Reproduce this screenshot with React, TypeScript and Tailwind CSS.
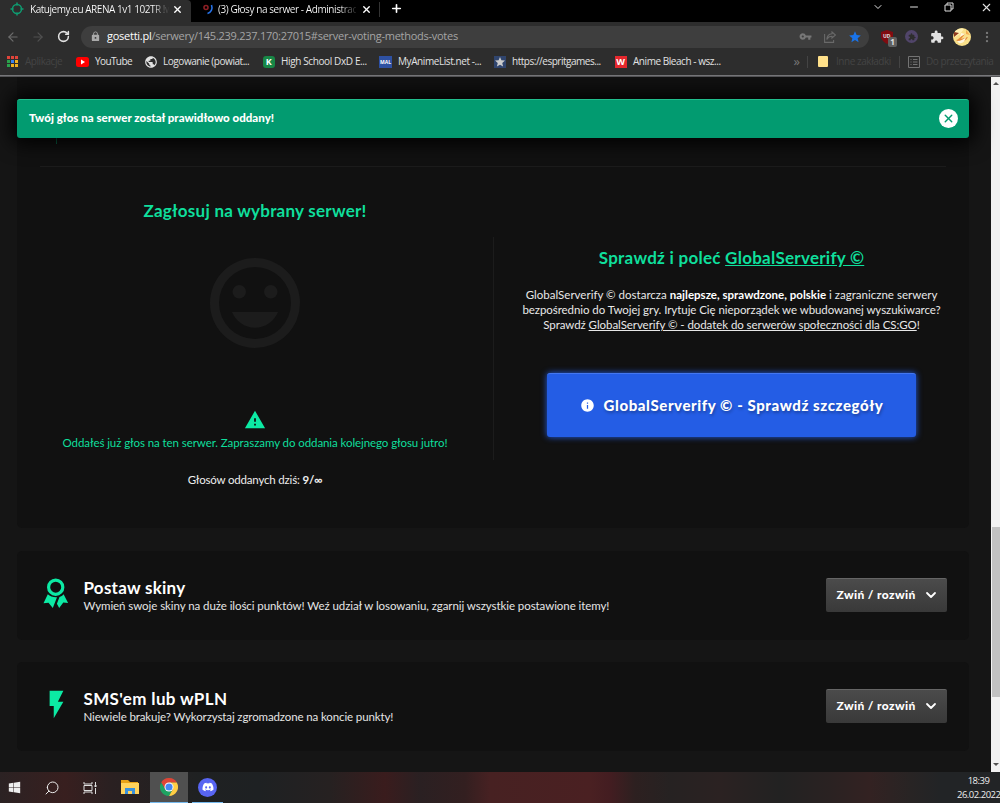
import type { ReactNode } from 'react';
import { MdWarning, MdFlashOn, MdLock, MdExtension, MdStar, MdPublic, MdVpnKey, MdInfo } from 'react-icons/md';
import { FaDiscord, FaWindows } from 'react-icons/fa';
import { ArrowLeft, ArrowRight, RotateCw, X, Plus, ChevronDown, Minus, Search, MoreVertical } from 'lucide-react';

const ui = "font-['Open_Sans','Noto_Sans',sans-serif]";

function Bookmark({ icon, label, className }: { icon: ReactNode; label: string; className: string }) {
  return (
    <div className={`flex shrink-0 items-center whitespace-nowrap ${className}`}>
      <span className="mr-[6px] flex w-[13px] shrink-0 justify-center">{icon}</span>
      <span>{label}</span>
    </div>
  );
}

function Target({ className }: { className: string }) {
  return (
    <svg viewBox="0 0 14 14" className={className} fill="none" stroke="#0f9b70" strokeWidth="1.5">
      <circle cx="7" cy="7" r="4.5" />
      <path d="M7 .5v3M7 10.500v3M.5 7h3M10.500 7h3" />
    </svg>
  );
}

function Ribbon() {
  return (
    <svg viewBox="0 0 26 31" className="mb-[4px] h-[31px] w-[26px]" fill="#0ceaa4">
      <path fillRule="evenodd" d="M12.700 .5a8.700 8.700 0 1 1 0 17.400 8.700 8.700 0 0 1 0-17.400zm0 3.200a5.500 5.500 0 1 0 0 11 5.500 5.500 0 0 0 0-11z" />
      <path d="M4.800 16.300 .5 25.200l5-.4 4.300 5.200 4.200-10.800c-3.600.2-6.900-.6-9.200-2.900z" />
      <path d="M20.600 16.300l4.500 8.700-4.800-.4-4.100 5.400-2.300-4.300 2.600-6.700c1.600-.5 3-1.400 4.100-2.700z" />
    </svg>
  );
}

function Toggle() {
  return (
    <button className="flex h-[34px] w-[121px] shrink-0 items-center justify-between rounded-[2px] border-t border-[#666] bg-linear-to-b from-[#4b4b4b] to-[#393939] pr-[9px] pb-px pl-[10.500px] text-[12px] font-black tracking-[0.370px] text-white">
      Zwiń / rozwiń
      <ChevronDown size={16} strokeWidth={2.700} className="-mr-px" />
    </button>
  );
}

function Method({ icon, title, text, titleClass, textClass }: { icon: ReactNode; title: string; text: string; titleClass: string; textClass: string }) {
  return (
    <section className="flex h-[89px] items-center rounded-[5px] bg-[#111] pr-[22px] pl-[25px]">
      <div className="flex w-[28px] justify-center">{icon}</div>
      <div className="ml-[13.500px] flex-1 whitespace-nowrap">
        <h3 className={`h-[21px] text-[17px] leading-[21px] font-bold text-white ${titleClass}`}>{title}</h3>
        <p className={`text-[11.500px] leading-[15px] text-[#e5e5e5] ${textClass}`}>{text}</p>
      </div>
      <Toggle />
    </section>
  );
}

function ShareArrow() {
  return (
    <svg viewBox="0 0 12 12" className="ml-[12px] h-[12px] w-[12px]" fill="none" stroke="#696969" strokeWidth="1.100">
      <path d="M.6 3v8.400h9V9" />
      <path d="M8 1l3.400 3L8 7V5.300C5.500 5.200 4 6.300 2.800 8.500 3 5.200 5 3 8 2.700z" />
    </svg>
  );
}

function Browser() {
  return (
    <header className={`${ui} h-[77px] bg-[#2d2d2d] text-[10px] text-[#e2e2e2]`}>
      <div className="flex h-[22px] bg-black">
        <div className="flex h-[22px] w-[191px] shrink-0 items-center rounded-tr-[4px] bg-[#2d2d2d] pb-[4px] pl-[10px]">
          <Target className="h-[14px] w-[14px]" />
          <span className="ml-[6px] w-[139px] shrink-0 bg-linear-to-r from-white from-88% to-[#333] bg-clip-text tracking-[-0.460px] whitespace-nowrap text-transparent">Katujemy.eu ARENA 1v1 102TR !w</span>
          <X size={11} strokeWidth={3} className="ml-[3px] text-white" />
        </div>
        <div className="flex h-[22px] w-[189px] shrink-0 items-center pb-[4px] pl-[11px]">
          <svg viewBox="0 0 12 12" className="h-[12px] w-[12px]" fill="none" strokeWidth="1.6">
            <circle cx="4" cy="4.500" r="2" stroke="#8d1f24" />
            <path d="M9.500 2c1.500 4-.5 7.500-4 8.500" stroke="#2672e8" />
          </svg>
          <span className="ml-[4px] w-[138px] shrink-0 bg-linear-to-r from-white from-88% to-[#222] bg-clip-text tracking-[-0.420px] whitespace-nowrap text-transparent">(3) Głosy na serwer - Administrac</span>
          <X size={11} strokeWidth={3} className="ml-[5px] text-white" />
          <span className="ml-auto h-[15px] w-px bg-[#333]" />
        </div>
        <Plus size={13} strokeWidth={3} className="mt-[2px] ml-[10px] text-white" />
        <div className="ml-auto flex h-[14px] items-center pr-[7px]">
          <ChevronDown size={12} className="mr-[24px]" />
          <Minus size={12} className="mr-[24px]" />
          <svg viewBox="0 0 10 10" className="mr-[26px] h-[10px] w-[10px]" fill="none" stroke="#ddd"><path d="M1 3h6v6H1zM3 3V1h6v6H7" /></svg>
          <X size={13} />
        </div>
      </div>
      <div className="flex h-[28px] items-center pt-[1px]">
        <ArrowLeft size={14} className="ml-[6px] text-[#6d6d6d]" />
        <ArrowRight size={14} className="ml-[11px] text-[#505050]" />
        <RotateCw size={13} strokeWidth={2.800} className="ml-[12px]" />
        <div className="ml-[11px] flex h-[22px] w-[788px] shrink-0 items-center rounded-full bg-[#3e3e3e] pr-[7px] pl-[9px]">
          <MdLock size={11} className="text-[#aaa]" />
          <span className="ml-[6px] text-[11px] tracking-[-0.260px] whitespace-nowrap text-[#a5a5a5]"><span className="text-white">gosetti.pl</span>/serwery/145.239.237.170:27015#server-voting-methods-votes</span>
          <MdVpnKey size={13} className="ml-auto text-[#777]" />
          <ShareArrow />
          <MdStar size={14} className="ml-[12px] text-[#1a73e8]" />
        </div>
        <div className="relative ml-[12px] h-[14px] w-[12px]">
          <svg viewBox="0 0 12 14" className="h-[14px] w-[12px]"><path d="M6 0l6 2v4c0 4-3 6-6 8-3-2-6-4-6-8V2z" fill="#800b10" /></svg>
          <span className="absolute top-[3px] left-[2px] text-[5px] leading-[6px] font-bold">UD</span>
          <span className="absolute top-[7px] left-[7px] h-[10px] w-[9px] rounded-[2px] bg-[#606060] text-center text-[8px] leading-[10px] font-bold">1</span>
        </div>
        <span className="ml-[12px] flex h-[13px] w-[13px] shrink-0 items-center justify-center rounded-full bg-[#51456a]"><MdExtension size={8} className="text-[#2d2d2d]" /></span>
        <MdExtension size={14} className="ml-[12px] shrink-0" />
        <Avatar />
        <MoreVertical size={14} className="ml-[9px] shrink-0 text-[#777]" />
      </div>
      <div className="flex h-[25px] items-center pb-[2px]">
        <Bookmark className="ml-[6px] w-[70px] tracking-[-0.450px] text-[#444]" label="Aplikacje" icon={<AppsIcon />} />
        <Bookmark className="w-[68px] tracking-[-0.600px]" label="YouTube" icon={<svg viewBox="0 0 13 10" className="h-[10px] w-[13px]"><rect width="13" height="10" rx="2.500" fill="#f00" /><path d="M5 2.500v5L9 5z" fill="#fff" /></svg>} />
        <Bookmark className="w-[118px] tracking-[-0.450px]" label="Logowanie (powiat..." icon={<MdPublic size={14} className="shrink-0" />} />
        <Bookmark className="w-[117px] tracking-[-0.380px]" label="High School DxD E..." icon={<span className="h-[12px] w-[12px] rounded-[3px] bg-[#188746] text-center text-[9px] leading-[12px] font-bold text-white">K</span>} />
        <Bookmark className="w-[114px] tracking-[-0.420px]" label="MyAnimeList.net -..." icon={<span className="h-[12px] w-[13px] bg-[#2e51a2] text-center text-[5px] leading-[12px] font-bold tracking-normal text-white">MAL</span>} />
        <Bookmark className="w-[121px] tracking-[-0.480px]" label="https://espritgames..." icon={<span className="bg-[#30456e]"><MdStar size={12} className="text-[#ccc]" /></span>} />
        <Bookmark className="tracking-[-0.450px]" label="Anime Bleach - wsz..." icon={<span className="h-[12px] w-[12px] bg-[#e5282d] text-center text-[9px] leading-[12px] font-bold tracking-normal text-white">W</span>} />
        <div className="ml-auto flex shrink-0 items-center pr-[1px] whitespace-nowrap text-[#444]">
          <span className="text-[13px] text-[#777]">»</span>
          <span className="ml-[7px] h-[12px] w-px bg-[#444]" />
          <span className="ml-[10px] h-[11px] w-[10px] rounded-[1px] bg-[#ffe08a]" />
          <span className="ml-[8px] w-[55px] tracking-[-0.450px]">Inne zakładki</span>
          <span className="ml-[8px] h-[12px] w-px bg-[#444]" />
          <svg viewBox="0 0 12 12" className="ml-[8px] h-[12px] w-[12px]" fill="none" stroke="#737373"><path d="M.5.500h11v11H.5zM2.500 3.500h1M5 3.500h4.500M2.500 6h1M5 6h4.500M2.500 8.500h1M5 8.500h4.500" /></svg>
          <span className="ml-[6px] w-[73px] tracking-[-0.450px]">Do przeczytania</span>
        </div>
      </div>
      <div className="h-[2px] bg-linear-to-b from-[#77777a] from-50% to-[#555558] to-50%" />
    </header>
  );
}

function AppsIcon() {
  return (
    <svg viewBox="0 0 11 11" className="h-[11px] w-[11px]">
      <path d="M0 0h3v3H0zM4 0h3v3H4zM8 0h3v3H8z" fill="#e0443a" />
      <path d="M0 4h3v3H0zM0 8h3v3H0z" fill="#2ba24c" />
      <path d="M4 4h3v3H4z" fill="#3b82ed" />
      <path d="M8 4h3v3H8zM4 8h3v3H4zM8 8h3v3H8z" fill="#f2b01e" />
    </svg>
  );
}

function Avatar() {
  return (
    <svg viewBox="0 0 18 18" className="ml-[9px] h-[18px] w-[18px] shrink-0">
      <circle cx="9" cy="9" r="9" fill="#f9e08a" />
      <path d="M1 5c3-5 8-5 10-4L7 6 2 9z" fill="#fff1b4" />
      <path d="M1 4l5 1-5 4z" fill="#8f3a1c" />
      <path d="M3 12c3 0 5-5 9-6l-4 5 7-2c-2 4-6 6-9 5z" fill="#e58a3a" />
      <path d="M4 13c4 0 7-2 9-4-1 5-4 7-7 6zM8 5l4 1-5 3z" fill="#fff6dc" />
      <path d="M13 2l4 5-4-1z" fill="#f2a94e" />
    </svg>
  );
}

function Taskbar() {
  return (
    <footer className={`${ui} flex h-[31px] items-center bg-[linear-gradient(90deg,#2b2223_0,#381f1f_6.500%,#2a2021_11%,#1f2122_20%,#1e2123_26%,#262121_33%,#3a1c1d_38.500%,#2a2022_42%,#331f20_46.500%,#472122_49%,#4a2022_59%,#431d21_61%,#2d2020_63.500%,#262222_67%,#2b2222_72%,#222222_78%,#2a2222_83%,#332222_87%,#282424_91%,#222426_94%,#222426_100%)] text-[#eee]`}>
      <FaWindows size={13} className="ml-[8px]" />
      <Search size={16} strokeWidth={1.500} className="ml-[23px] -scale-x-100" />
      <svg viewBox="0 0 14 14" className="ml-[23px] h-[14px] w-[14px]" fill="none" stroke="#ddd"><path d="M1 1v2h8V1M1 13v-2h8v2M1 4.500h8v5H1zM12.500 1v3M12.500 7v6" /><path d="M11.500 5h2" strokeWidth="2" /></svg>
      <svg viewBox="0 0 18 15" className="ml-[24px] h-[15px] w-[18px]"><path d="M0 0h7l2 2h8v12H0z" fill="#e8a317" /><path d="M0 3h18v11H0z" fill="#ffd35c" /><path d="M4 8h10v6h-3v-3H7v3H4z" fill="#3a91dc" /></svg>
      <div className="ml-[11px] flex h-[31px] w-[38px] items-center justify-center border-b border-[#76b9ed] bg-[#505050]">
        <svg viewBox="0 0 48 48" className="h-[18px] w-[18px]">
          <path d="M3.200 12A24 24 0 0 1 44.800 12H24L13.600 30z" fill="#de4536" />
          <path d="M3.200 12A24 24 0 0 0 24 48l10.400-18-10.400 6-10.400-6z" fill="#1ea362" />
          <path d="M44.800 12A24 24 0 0 1 24 48l10.400-18V18L24 12z" fill="#ffce44" />
          <circle cx="24" cy="24" r="12" fill="#fff" />
          <circle cx="24" cy="24" r="9.500" fill="#4587f3" />
        </svg>
      </div>
      <div className="ml-[4px] flex h-[31px] w-[31px] items-center justify-center border-b border-[#76b9ed]">
        <span className="flex h-[19px] w-[19px] items-center justify-center rounded-full bg-[#5865f2]"><FaDiscord size={12} className="text-white" /></span>
      </div>
      <div className="ml-auto w-[43px] text-center text-[9.500px] leading-[14px] tracking-[-0.500px] whitespace-nowrap">
        <div>18:39</div>
        <div>26.02.2022</div>
      </div>
    </footer>
  );
}

export default function App() {
  return (
    <div className="flex h-[803px] w-[1000px] flex-col overflow-hidden bg-[#151515] font-['Lato',sans-serif]">
      <Browser />
      <div className="relative flex h-[695px]">
        <main className="w-[991px] pl-[17px]">
          <div className="flex w-[952px] flex-col gap-[22.250px]">
            <section className="h-[451.250px] rounded-b-[5px] bg-[#111] px-[23px]">
              <div className="flex h-[90px] items-start border-b border-[#1c1c1c] pt-[58px] pl-[16px]">
                <span className="h-[9px] w-px bg-[#08704f]" />
              </div>
              <div className="flex">
                <div className="flex w-[430px] shrink-0 flex-col items-center whitespace-nowrap">
                  <h2 className="mt-[33px] text-[17px] leading-[22px] font-bold tracking-[0.250px] text-[#0fdf9c]">Zagłosuj na wybrany serwer!</h2>
                  <svg viewBox="0 0 24 24" className="mt-[27px] h-[108px] w-[108px]" fill="#1c1c1c">
                    <path fillRule="evenodd" d="M12 2a10 10 0 1 0 0 20 10 10 0 0 0 0-20zm0 2a8 8 0 1 1 0 16 8 8 0 0 1 0-16z" />
                    <circle cx="8.500" cy="9.500" r="1.500" />
                    <circle cx="15.500" cy="9.500" r="1.500" />
                    <path d="M12 17.500c2.330 0 4.310-1.460 5.110-3.500H6.890c.8 2.040 2.780 3.500 5.110 3.500z" />
                  </svg>
                  <MdWarning size={22} className="mt-[52px] text-[#0ceaa4]" />
                  <p className="mt-[4px] text-[11.500px] leading-[15px] tracking-[-0.080px] text-[#0fdf9c]">Oddałeś już głos na ten serwer. Zapraszamy do oddania kolejnego głosu jutro!</p>
                  <p className="mt-[22px] text-[11.500px] leading-[15px] tracking-[-0.180px] text-[#eee]">Głosów oddanych dziś: <b>9/∞</b></p>
                </div>
                <div className="mt-[70px] ml-[23px] h-[223px] w-px shrink-0 bg-[#1c1c1c]" />
                <div className="flex w-[475px] shrink-0 flex-col items-center text-center whitespace-nowrap">
                  <h2 className="mt-[80px] text-[17px] leading-[22px] font-bold tracking-[0.260px] text-[#0fdf9c]">Sprawdź i poleć <span className="underline">GlobalServerify ©</span></h2>
                  <div className="mt-[18px] text-[11.500px] leading-[15px] tracking-[-0.060px] text-[#e8e8e8]">
                    <p className="tracking-[0.010px]">GlobalServerify © dostarcza <b className="text-white">najlepsze, sprawdzone, polskie</b> i zagraniczne serwery</p>
                    <p>bezpośrednio do Twojej gry. Irytuje Cię nieporządek we wbudowanej wyszukiwarce?</p>
                    <p>Sprawdź <span className="underline">GlobalServerify © - dodatek do serwerów społeczności dla CS:GO</span>!</p>
                  </div>
                  <button className="mt-[41px] flex h-[64px] w-[369px] items-center justify-center rounded-[3px] border-t border-[#4477ef] bg-[#245de5] text-[15px] font-black tracking-[0.580px] text-white shadow-[0_0_6px_#245de5] text-shadow-[1px_2px_3px_rgba(0,0,0,0.3)]">
                    <MdInfo size={15} className="mr-[9px]" />
                    GlobalServerify © - Sprawdź szczegóły
                  </button>
                </div>
              </div>
            </section>
            <Method icon={<Ribbon />} title="Postaw skiny" text="Wymień swoje skiny na duże ilości punktów! Weź udział w losowaniu, zgarnij wszystkie postawione itemy!" titleClass="tracking-[0.250px]" textClass="tracking-[-0.070px]" />
            <Method icon={<MdFlashOn size={33} className="mb-[3px] shrink-0 text-[#0ceaa4]" />} title="SMS'em lub wPLN" text="Niewiele brakuje? Wykorzystaj zgromadzone na koncie punkty!" titleClass="tracking-[0.350px]" textClass="tracking-[-0.120px]" />
          </div>
        </main>
        <aside className="flex w-[9px] flex-col items-center bg-[#f1f1f1]">
          <span className="mt-[5px] border-x-[3px] border-b-[3px] border-x-transparent border-b-[#505050]" />
          <span className="mt-[442px] h-[170px] w-[8px] shrink-0 self-end bg-[#c1c1c1]" />
          <span className="mt-[66px] border-x-[3px] border-t-[3px] border-x-transparent border-t-[#505050]" />
        </aside>
        <div role="alert" className="absolute top-[21.500px] left-[17px] flex h-[39px] w-[952px] items-center justify-between rounded-[3px] border-t border-[#20bd8c] bg-[#029b70] pr-[11px] pl-[12px] text-[11.500px] font-black text-white shadow-[0_0_20px_5px_#000]">
          <span className="pb-[2px] tracking-[0.020px]">Twój głos na serwer został prawidłowo oddany!</span>
          <span className="flex h-[19px] w-[19px] items-center justify-center rounded-full bg-white"><X size={13} strokeWidth={2.500} className="text-[#029b70]" /></span>
        </div>
      </div>
      <Taskbar />
    </div>
  );
}
